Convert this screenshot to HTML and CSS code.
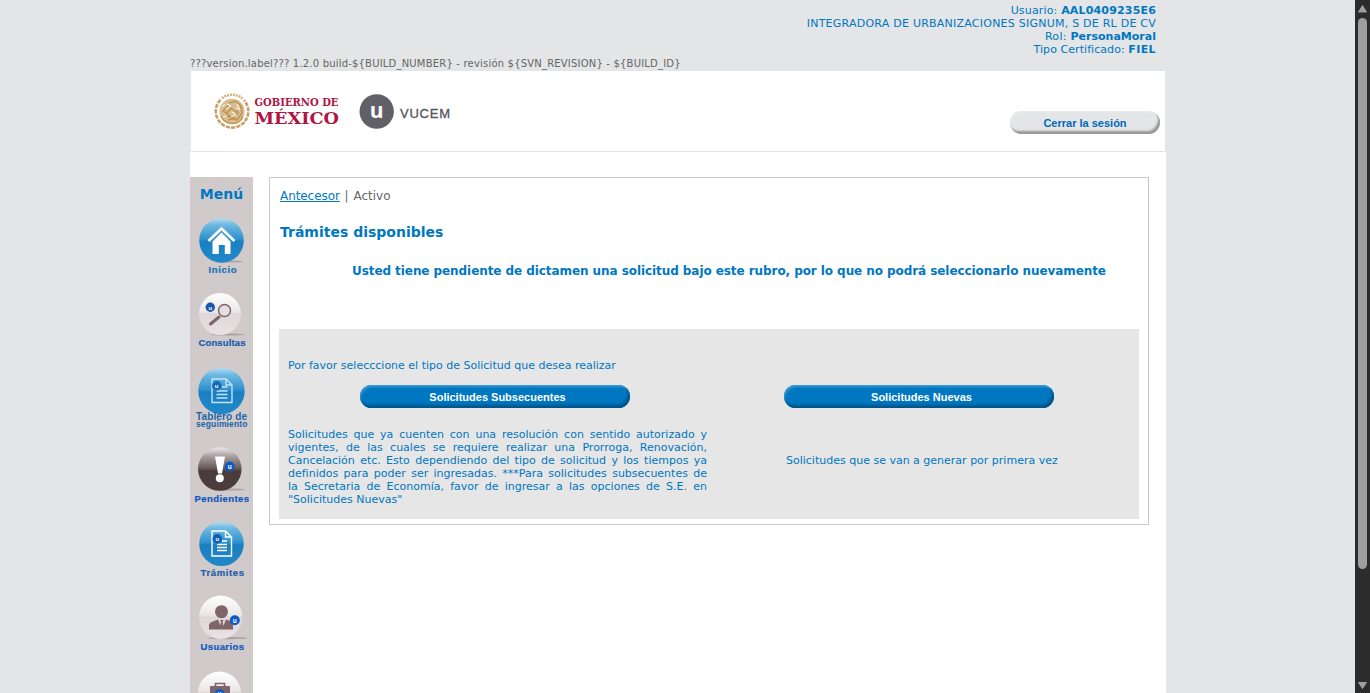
FILE: index.html
```html
<!DOCTYPE html>
<html lang="es">
<head>
<meta charset="utf-8">
<title>VUCEM</title>
<link rel="stylesheet" href="styles.css">
</head>
<body>
<div class="viewport">
<div class="page">
  <div class="user-info">
    <div><span class="u1">Usuario: <b>AAL0409235E6</b></span></div>
    <div><span class="u2">INTEGRADORA DE URBANIZACIONES SIGNUM, S DE RL DE CV</span></div>
    <div><span class="u3">Rol: <b>PersonaMoral</b></span></div>
    <div><span class="u4">Tipo Certificado: <b>FIEL</b></span></div>
  </div>
  <div class="version"><span>???version.label??? 1.2.0 build-${BUILD_NUMBER} - revisión ${SVN_REVISION} - ${BUILD_ID}</span></div>
  <header class="banner">
    <svg class="brand" width="280" height="50" viewBox="205 87 280 50">
      <path d="M222 98.200a16.300 16.300 0 0 1 20.500.3" fill="none" stroke="#d3b27f" stroke-width="2.600" stroke-dasharray="2 .9"/>
      <path d="M220.500 99.800a16.300 16.300 0 1 0 23.300.2" fill="none" stroke="#c9a168" stroke-width="2.600" stroke-dasharray="4.200 1.100"/>
      <circle cx="232" cy="111.300" r="12.600" fill="#d9bc90"/>
      <path d="M221 116q3 7 11 7.500t11-7M223 111l5-5 3 3-5 4zM229 103l7-2 5 5 1 7-5 7-6-2-4-5M231 108l5 4 5-5M226 116l7 1 6-5M228 120l8-2" fill="none" stroke="#c19450" stroke-width="1.500"/>
      <path d="M227 104l4 2-5 3M237 104l3 6-4-2M232 112l4 3-5 2M223 117l4-1M222 107l3-3" fill="none" stroke="#fff" stroke-width="1"/>
      <text class="gob" x="254.500" y="105.500" font-size="10.800" textLength="84" lengthAdjust="spacingAndGlyphs">GOBIERNO DE</text>
      <text class="gob" x="254.500" y="123.700" font-size="17" textLength="84.500" lengthAdjust="spacingAndGlyphs">MÉXICO</text>
      <circle cx="376.700" cy="111.500" r="17.200" fill="#616066"/>
      <text class="umark" x="376.700" y="117.500" font-size="21" text-anchor="middle">u</text>
      <text class="vucem" x="400" y="118" font-size="13" textLength="50">VUCEM</text>
    </svg>
    <button class="logout"><span>Cerrar la sesión</span></button>
  </header>
  <div class="columns">
    <nav class="menu">
      <h2><span>Menú</span></h2>
      <svg width="63" height="76" viewBox="190 210 63 76">
        <defs>
          <linearGradient id="blue" x1="0" y1="0" x2="0" y2="1"><stop offset="0" stop-color="#b5dcf0"/><stop offset=".15" stop-color="#6db9e1"/><stop offset=".48" stop-color="#2d90cc"/><stop offset=".52" stop-color="#1a7fc1"/><stop offset="1" stop-color="#2189c9"/></linearGradient>
          <linearGradient id="pale" x1="0" y1="0" x2="0" y2="1"><stop offset="0" stop-color="#fff"/><stop offset=".45" stop-color="#ebe7e8"/><stop offset=".5" stop-color="#ded6d8"/><stop offset="1" stop-color="#eae3e5"/></linearGradient>
          <linearGradient id="dark" x1="0" y1="0" x2="0" y2="1"><stop offset="0" stop-color="#eeeaea"/><stop offset=".2" stop-color="#aaa2a2"/><stop offset=".5" stop-color="#615654"/><stop offset=".54" stop-color="#4a3c3b"/><stop offset="1" stop-color="#4c3d3c"/></linearGradient>
        </defs>
        <ellipse cx="229" cy="261.500" rx="14" ry="1" fill="#aaa3a3"/>
        <circle cx="221.500" cy="240.500" r="22.300" fill="url(#blue)"/>
        <path d="M212.500 241.500l9-9 9 9v12.500h-5.700v-9h-6v9h-6.300z" fill="#fff"/>
        <path d="M208.500 241l13-12.500 13 12.500" fill="none" stroke="#fff" stroke-width="2.600"/>
        <path d="M210.500 242.300l11-10.600 11 10.600" fill="none" stroke="#3c98cf" stroke-width=".8"/>
        <text class="lbl light" x="208.500" y="273" font-size="9.500" textLength="28">Inicio</text>
      </svg>
      <svg width="63" height="74" viewBox="190 286 63 74">
        <ellipse cx="228" cy="334.500" rx="17" ry="1" fill="#aaa3a3"/>
        <circle cx="220" cy="314" r="21" fill="url(#pale)"/>
        <circle cx="224.500" cy="310.500" r="6" fill="#e5dee0" stroke="#80646b" stroke-width="1.500"/>
        <path d="M219 317l-8.500 7" stroke="#80646b" stroke-width="3" stroke-linecap="round"/>
        <circle cx="210.300" cy="307.300" r="4.700" fill="#1857ab"/>
        <text class="badge" x="210.300" y="309.500" font-size="6">u</text>
        <text class="lbl" x="198.500" y="345.500" font-size="9.500" textLength="47">Consultas</text>
      </svg>
      <svg width="63" height="80" viewBox="190 360 63 80">
        <circle cx="221.500" cy="391" r="23.200" fill="url(#blue)"/>
        <path d="M212 379h14l6 6v17.500h-20zM226 379v6h6M216.500 391h11M216.500 394.500h11M216.500 398h11M222 387h5.500" fill="none" stroke="#c5e2f2" stroke-width="1.400"/>
        <circle cx="216.700" cy="385.700" r="4.700" fill="#1768b5"/>
        <text class="badge" x="216.700" y="388" font-size="6">u</text>
        <text class="lbl tab" x="196" y="420" font-size="10" textLength="51">Tablero de</text>
        <text class="lbl tab" x="196" y="426.500" font-size="8.500" textLength="51.500">seguimiento</text>
      </svg>
      <svg width="63" height="74" viewBox="190 440 63 74">
        <ellipse cx="229" cy="489.500" rx="16" ry="1" fill="#aaa3a3"/>
        <circle cx="219.800" cy="469" r="21.800" fill="url(#dark)"/>
        <path d="M215 456.500h10l-3 17h-4z" fill="#fff"/>
        <circle cx="219.800" cy="478.300" r="4" fill="#fff"/>
        <circle cx="229.700" cy="466.500" r="4.900" fill="#0d5bc2"/>
        <text class="badge" x="229.700" y="468.800" font-size="6.500">u</text>
        <text class="lbl vivid" x="194.500" y="501.500" font-size="9.500" textLength="54.500">Pendientes</text>
      </svg>
      <svg width="63" height="74" viewBox="190 514 63 74">
        <circle cx="221.500" cy="543.800" r="22.300" fill="url(#blue)"/>
        <path d="M212 531h13.500l6 6v19H212zM225.500 531v6h6M217 544.500h10M217 547.500h10M217 550.500h10M222 541h5" fill="none" stroke="#fff" stroke-width="1.400"/>
        <circle cx="217.300" cy="538.800" r="4.700" fill="#0f5eb4"/>
        <text class="badge" x="217.300" y="541" font-size="6">u</text>
        <text class="lbl" x="200.500" y="576" font-size="9.500" textLength="43.500">Trámites</text>
      </svg>
      <svg width="63" height="74" viewBox="190 588 63 74">
        <ellipse cx="228" cy="638" rx="20" ry="1.200" fill="#aaa3a3"/>
        <circle cx="220.700" cy="617.200" r="21.700" fill="url(#pale)"/>
        <circle cx="221.500" cy="611.700" r="6.500" fill="#80646b"/>
        <path d="M209 629.500v-4q0-3 4-4l5-2 4 10 4-10 4 1.500q3 1.500 3 5v3.500z" fill="#80646b"/>
        <path d="M220 620h3.500l-1 2 1.500 5-2 2.500-2.200-2.500 1.200-5z" fill="#80646b"/>
        <circle cx="234.800" cy="620.200" r="5" fill="#0d5bc2"/>
        <text class="badge" x="234.800" y="622.500" font-size="6.500">u</text>
        <text class="lbl vivid" x="200.500" y="650" font-size="9.500" textLength="43.500">Usuarios</text>
      </svg>
      <svg width="63" height="74" viewBox="190 662 63 74">
        <circle cx="219.500" cy="693" r="21.500" fill="url(#pale)"/>
        <rect x="210" y="686" width="20" height="14" rx="1" fill="#80646b"/>
        <path d="M215.500 686v-2.500h9v2.500" fill="none" stroke="#80646b" stroke-width="1.700"/>
        <circle cx="219.600" cy="693.600" r="4.700" fill="#0d5bc2"/>
        <text class="badge" x="219.600" y="695.500" font-size="6.500">u</text>
      </svg>
    </nav>
    <main class="content">
      <div class="crumbs"><a>Antecesor</a> | Activo</div>
      <h1><span>Trámites disponibles</span></h1>
      <p class="notice"><span>Usted tiene pendiente de dictamen una solicitud bajo este rubro, por lo que no podrá seleccionarlo nuevamente</span></p>
      <section class="panel">
        <p class="prompt"><span>Por favor selecccione el tipo de Solicitud que desea realizar</span></p>
        <div class="choices">
          <div class="choice first">
            <button class="pill"><span>Solicitudes Subsecuentes</span></button>
            <div class="desc">
              <div>Solicitudes que ya cuenten con una resolución con sentido autorizado y</div>
              <div>vigentes, de las cuales se requiere realizar una Prorroga, Renovación,</div>
              <div>Cancelación etc. Esto dependiendo del tipo de solicitud y los tiempos ya</div>
              <div>definidos para poder ser ingresadas. ***Para solicitudes subsecuentes de</div>
              <div>la Secretaria de Economía, favor de ingresar a las opciones de S.E. en</div>
              <div class="last">"Solicitudes Nuevas"</div>
            </div>
          </div>
          <div class="choice second">
            <button class="pill"><span>Solicitudes Nuevas</span></button>
            <div class="desc-new"><span>Solicitudes que se van a generar por primera vez</span></div>
          </div>
        </div>
      </section>
    </main>
  </div>
</div>
<div class="scrollbar">
  <svg width="15" height="18" viewBox="0 0 15 18"><path d="M7.500 5.500l4 6.500h-8z" fill="#9f9f9f" stroke="#9f9f9f" stroke-linejoin="round"/></svg>
  <div class="thumb"></div>
  <svg class="down" width="15" height="14" viewBox="0 0 15 14"><path d="M7.500 9.500l4-6h-8z" fill="#9f9f9f" stroke="#9f9f9f" stroke-linejoin="round"/></svg>
</div>
</div>
</body>
</html>
```
FILE: styles.css
```css
* { box-sizing: border-box; }
body { margin: 0; background: #e3e5e7; color: #0077c1; font: 11px/13px Verdana, "DejaVu Sans", sans-serif; overflow: hidden; }
.viewport { display: flex; height: 693px; overflow: hidden; }
.page { width: 976px; margin-left: 190px; flex: none; }
.user-info { height: 56px; padding: 4px 10px 0 0; text-align: right; white-space: nowrap; }
.u1 { letter-spacing: .17px; }
.u2 { letter-spacing: .235px; }
.u3 { letter-spacing: .3px; }
.u3 b { letter-spacing: 0; }
.u4 { letter-spacing: .06px; }
.u4 b { letter-spacing: .4px; }
.version { height: 15px; font-size: 10px; line-height: 15px; letter-spacing: .193px; color: #666; white-space: nowrap; }
.banner { display: flex; justify-content: space-between; height: 80px; margin: 0 1px; padding: 16px 5px 0 14px; background: #fff; }
.brand { flex: none; }
.gob { font-family: "DejaVu Serif", serif; font-weight: bold; fill: #b01643; }
.umark { font-family: "Open Sans", sans-serif; font-weight: bold; fill: #fff; }
.vucem { font-family: "Liberation Sans", Arial, sans-serif; fill: #55555b; stroke: #55555b; stroke-width: .3px; }
button { border: 0; padding: 0; font: bold 11px/23px "Liberation Sans", Arial, sans-serif; text-align: center; }
.logout { width: 150px; height: 23px; margin-top: 24px; padding-top: 1px; border-radius: 12px; background: #e4e5e7; color: #0068b8; box-shadow: inset -2px -3px 2px #999, inset 1px 1px 2px #e9ecec; }
.columns { display: flex; height: 541px; margin-top: 1px; padding-top: 25px; background: #fff; }
.menu { width: 63px; flex: none; background: #d0caca; overflow: hidden; }
.menu svg { display: block; }
.menu h2 { height: 33px; margin: 0; font-size: 14px; line-height: 34px; text-align: center; }
.lbl { font-family: "Liberation Sans", Arial, sans-serif; font-weight: bold; fill: #1b5cae; stroke: #1b5cae; stroke-width: .2px; }
.light { fill: #1a70b9; stroke: #1a70b9; }
.tab { fill: #2065a8; stroke: none; }
.vivid { fill: #0d57c0; stroke: #0d57c0; }
.badge { font-family: "Liberation Sans", Arial, sans-serif; font-weight: bold; fill: #fff; text-anchor: middle; }
.content { width: 880px; height: 348px; margin-left: 16px; padding: 0 9px; border: 1px solid #ccc8ca; white-space: nowrap; }
.crumbs { height: 36px; padding-left: 1px; font-size: 12px; line-height: 36px; word-spacing: 1px; color: #666; }
.crumbs a { color: #0077c1; text-decoration: underline; letter-spacing: -.07px; }
h1 { height: 36px; margin: 0; padding-left: 1px; font-size: 14px; line-height: 36px; }
.notice { height: 79px; margin: 0; padding-left: 73px; font-size: 12px; line-height: 43px; font-weight: bold; letter-spacing: -.071px; }
.panel { width: 860px; height: 190px; padding: 30px 9px 0; background: #e6e6e6; }
.prompt { height: 26px; margin: 0; line-height: 14px; }
.choices { display: flex; }
.choice { display: flex; flex-direction: column; }
.first { width: 420px; }
.second { width: 272px; margin-left: 76px; }
.pill { width: 270px; height: 23px; padding: 1px 0 0 5px; border-radius: 12px; background: #0077c1; color: #fff; box-shadow: inset -2px -3px 3px #005488, inset 1px 2px 2px #3b99d2; }
.first .pill { margin-left: 72px; }
.desc { width: 419px; margin-top: 20px; }
.desc div { text-align-last: justify; }
.desc .last { text-align-last: left; }
.desc-new { margin: 46px 0 0 2px; }
.scrollbar { width: 15px; height: 693px; margin-left: auto; flex: none; display: flex; flex-direction: column; align-items: center; background: #2c2c2c; }
.thumb { width: 9px; height: 551px; border-radius: 5px; background: #9f9f9f; }
.down { margin-top: auto; }
```
